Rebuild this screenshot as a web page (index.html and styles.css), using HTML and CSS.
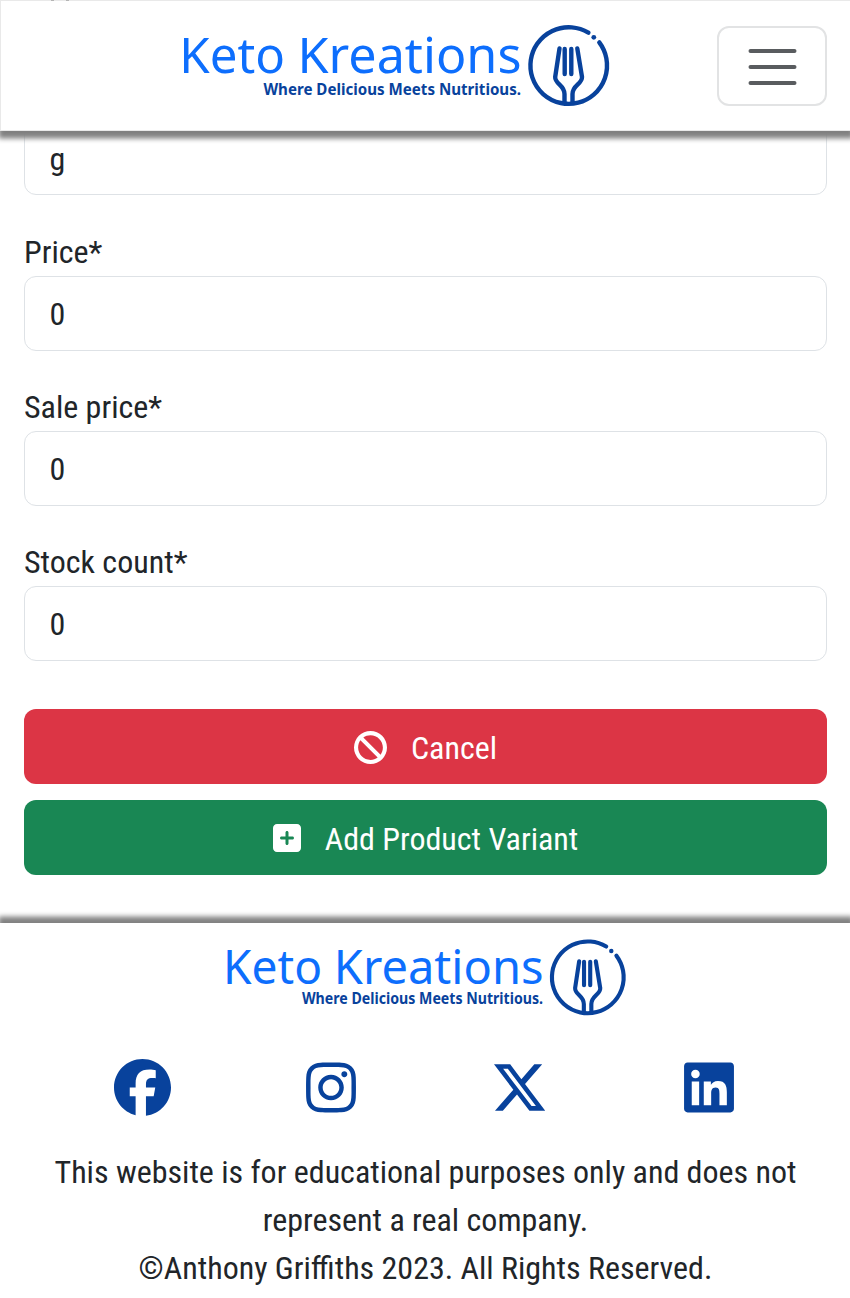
FILE: index.html
```html
<!DOCTYPE html>
<html lang="en">
<head>
<meta charset="utf-8">
<title>Keto Kreations</title>
<link rel="stylesheet" href="styles.css">
</head>
<body>
<svg class="defs" width="0" height="0" aria-hidden="true">
  <symbol id="logo" viewBox="175 15 440 101" overflow="visible">
    <g fill="#0d6efd" font-size="50" class="logo-font">
      <text x="179.200" y="73" textLength="105.800" lengthAdjust="spacingAndGlyphs">Keto</text>
      <text x="297.500" y="73" textLength="224" lengthAdjust="spacingAndGlyphs">Kreations</text>
    </g>
    <text class="logo-font" x="263.500" y="94.500" font-size="16.500" font-weight="700" fill="#08429c" textLength="257.500" lengthAdjust="spacingAndGlyphs">Where Delicious Meets Nutritious.</text>
    <g fill="none" stroke="#08429c" stroke-width="4.400" stroke-linecap="round">
      <path d="M588.400 32.670A38.300 38.300 0 1 0 599.290 42.450"/>
      <path d="M559.500 48.500L555.200 77C554.800 84 564.500 85 564.500 94V102M577.300 48.500L582 77C582.400 84 572.500 85 572.500 94V102"/>
      <path d="M564.700 49V74M571.300 49V74"/>
    </g>
    <circle cx="593.800" cy="37.300" r="2.400" fill="#08429c"/>
  </symbol>
</svg>
<header class="navbar">
  <svg class="nav-logo" role="img" aria-label="Keto Kreations"><use href="#logo"/></svg>
  <button class="toggler" aria-label="Menu"><svg viewBox="0 0 30 30"><path stroke="#212529" stroke-opacity=".75" stroke-linecap="round" stroke-width="2" d="M4 7h22M4 15h22M4 23h22"/></svg></button>
</header>
<main class="form">
  <div class="field"><div class="input">g</div></div>
  <div class="field"><label>Price*</label><div class="input">0</div></div>
  <div class="field"><label>Sale price*</label><div class="input">0</div></div>
  <div class="field"><label>Stock count*</label><div class="input">0</div></div>
  <div class="actions">
    <button class="btn cancel"><svg width="33" height="33" viewBox="0 0 512 512"><path d="M367.200 412.500L99.500 144.800C77.100 176.100 64 214.500 64 256c0 106 86 192 192 192c41.500 0 79.900-13.100 111.200-35.500zm45.300-45.300C434.900 335.900 448 297.500 448 256c0-106-86-192-192-192c-41.500 0-79.900 13.100-111.200 35.500L412.500 367.200zM0 256a256 256 0 1 1 512 0A256 256 0 1 1 0 256z"/></svg><span>Cancel</span></button>
    <button class="btn add"><svg width="28" height="32" viewBox="0 0 448 512"><path d="M64 32C28.700 32 0 60.700 0 96V416c0 35.300 28.700 64 64 64H384c35.300 0 64-28.700 64-64V96c0-35.300-28.700-64-64-64H64zM200 344V280H136c-13.300 0-24-10.700-24-24s10.700-24 24-24h64V168c0-13.300 10.700-24 24-24s24 10.700 24 24v64h64c13.300 0 24 10.700 24 24s-10.700 24-24 24H248v64c0 13.300-10.700 24-24 24s-24-10.700-24-24z"/></svg><span>Add Product Variant</span></button>
  </div>
</main>
<footer class="footer">
  <svg class="foot-logo" role="img" aria-label="Keto Kreations"><use href="#logo"/></svg>
  <div class="social">
    <a><svg width="57" height="57" viewBox="0 0 512 512"><path d="M512 256C512 114.600 397.400 0 256 0S0 114.600 0 256C0 376 82.700 476.800 194.200 504.500V334.200H141.400V256h52.800V222.300c0-87.100 39.400-127.500 125-127.500c16.200 0 44.200 3.200 55.700 6.400V172c-6-.6-16.500-1-29.600-1c-42 0-58.200 15.900-58.200 57.200V256h83.600l-14.400 78.200H287V510.100C413.800 494.800 512 386.900 512 256z"/></svg></a>
    <a><svg width="50" height="57" viewBox="0 0 448 512"><path d="M224.100 141c-63.600 0-114.900 51.300-114.900 114.900s51.300 114.900 114.900 114.900S339 319.500 339 255.900 287.700 141 224.100 141zm0 189.600c-41.100 0-74.700-33.500-74.700-74.700s33.500-74.700 74.700-74.700 74.700 33.500 74.700 74.700-33.600 74.700-74.700 74.700zm146.400-194.300c0 14.900-12 26.800-26.800 26.800-14.900 0-26.800-12-26.800-26.800s12-26.800 26.800-26.800 26.800 12 26.800 26.800zm76.100 27.200c-1.700-35.900-9.900-67.700-36.200-93.900-26.200-26.200-58-34.400-93.900-36.200-37-2.100-147.900-2.100-184.900 0-35.800 1.700-67.600 9.900-93.900 36.100s-34.400 58-36.200 93.900c-2.100 37-2.100 147.900 0 184.900 1.700 35.900 9.900 67.700 36.200 93.900s58 34.400 93.900 36.200c37 2.100 147.900 2.100 184.900 0 35.900-1.700 67.700-9.900 93.900-36.200 26.200-26.200 34.400-58 36.200-93.900 2.100-37 2.100-147.800 0-184.800zM398.800 388c-7.800 19.600-22.900 34.700-42.600 42.600-29.500 11.700-99.500 9-132.100 9s-102.700 2.600-132.100-9c-19.600-7.800-34.700-22.900-42.600-42.600-11.700-29.500-9-99.500-9-132.100s-2.600-102.700 9-132.100c7.800-19.600 22.900-34.700 42.600-42.600 29.500-11.700 99.500-9 132.100-9s102.700-2.600 132.100 9c19.600 7.800 34.700 22.900 42.600 42.600 11.700 29.500 9 99.500 9 132.100s2.700 102.700-9 132.100z"/></svg></a>
    <a><svg width="57" height="57" viewBox="0 0 512 512"><path d="M389.200 48h70.600L305.600 224.200 487 464H345L233.700 318.600 106.500 464H35.800L200.700 275.500 26.800 48H172.400L272.900 180.900 389.200 48zM364.400 421.800h39.100L151.100 88h-42L364.400 421.800z"/></svg></a>
    <a><svg width="50" height="57" viewBox="0 0 448 512"><path d="M416 32H31.900C14.300 32 0 46.500 0 64.300v383.400C0 465.500 14.300 480 31.900 480H416c17.600 0 32-14.500 32-32.300V64.300c0-17.800-14.400-32.300-32-32.300zM135.400 416H69V202.200h66.500V416zm-33.200-243c-21.300 0-38.500-17.300-38.500-38.500S80.900 96 102.200 96c21.200 0 38.500 17.300 38.500 38.500 0 21.300-17.200 38.500-38.500 38.500zm282.100 243h-66.400V312c0-24.800-.5-56.700-34.500-56.700-34.600 0-39.900 27-39.900 54.900V416h-66.400V202.200h63.700v29.200h.9c8.900-16.800 30.600-34.500 62.900-34.500 67.200 0 79.700 44.300 79.700 101.900V416z"/></svg></a>
  </div>
  <p class="note">This website is for educational purposes only and does not<br>represent a real company.<br>©Anthony Griffiths 2023. All Rights Reserved.</p>
</footer>
</body>
</html>
```
FILE: styles.css
```css
* { box-sizing: border-box; }
html { overflow: hidden; }
body {
  margin: 0;
  width: 851px;
  height: 1298px;
  overflow: hidden;
  background: #fff;
  color: #212529;
  font-family: "Roboto Condensed", Roboto, sans-serif;
  font-stretch: 75%;
  font-size: 32px;
  line-height: 48px;
}
svg { display: block; }
.defs { position: absolute; }
.logo-font { font-family: "Noto Sans", sans-serif; font-stretch: 100%; }
.navbar {
  position: relative;
  z-index: 1;
  display: flex;
  align-items: center;
  justify-content: space-between;
  height: 131px;
  padding: 0 23px 0 174px;
  background: #fff;
  border: 1px solid #e9e9e9;
  box-shadow: 0 5px 5px 2.5px gray;
}
/* tips of the scrolled-away text showing above the bar */
.navbar::before {
  content: "";
  position: absolute;
  top: -1px;
  left: 50px;
  width: 12px;
  height: 1px;
  border: solid #b5b5b5;
  border-width: 0 3px;
}
.nav-logo { width: 440px; height: 101px; overflow: visible; }
.toggler {
  width: 110px;
  height: 80px;
  padding: 1px 23px 0;
  background: none;
  border: 2px solid #e2e3e4;
  border-radius: 12px;
}
.toggler svg { width: 65px; height: 60px; margin: 1px 0 0 -2px; fill: none; }
.form { display: flow-root; padding: 0 24px; height: 792px; }
.field { height: 155.2px; }
.field:first-child { height: 108px; margin-top: -11px; }
.field:first-child .input { padding-top: 14px; }
.field label { display: block; }
.input {
  height: 74.6px;
  padding: 13px 24.5px 0;
  border: 1.5px solid #dee2e6;
  border-radius: 12px;
}
.actions { display: flex; flex-direction: column; gap: 16px; padding-top: 15.4px; }
.btn {
  display: flex;
  align-items: center;
  justify-content: center;
  gap: 24px;
  height: 75px;
  padding: 0;
  border: 0;
  border-radius: 12px;
  color: #fff;
  fill: #fff;
  font: inherit;
  font-stretch: 75%;
}
.btn svg { margin-top: 1.5px; }
.btn span { padding-top: 3px; }
.cancel { background: #dc3545; }
.add { background: #198754; }
.footer {
  height: 375px;
  padding-top: 6.7px;
  background: #fff;
  box-shadow: 0 -5px 5px 2.5px gray;
}
.foot-logo { width: 412.2px; height: 94.6px; margin: 0 auto; overflow: visible; }
.social {
  display: grid;
  grid-template-columns: repeat(4, 1fr);
  justify-items: center;
  padding: 34.7px 48px 0;
  fill: #08429c;
}
.note { margin: 32px 0 0; text-align: center; }
```
